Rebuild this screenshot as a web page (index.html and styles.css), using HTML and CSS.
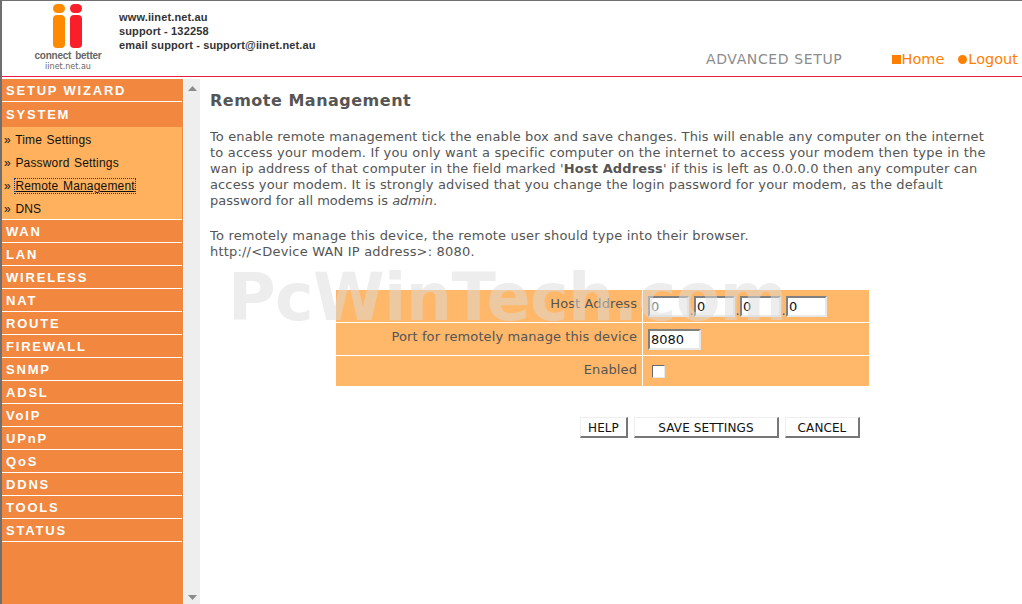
FILE: index.html
```html
<!DOCTYPE html>
<html lang="en">
<head>
<meta charset="utf-8">
<title>Remote Management</title>
<link rel="stylesheet" href="styles.css">
</head>
<body>
<div class="frame">
  <header class="top">
    <div class="logo">
      <svg class="logo-mark" width="32" height="46" viewBox="0 0 32 46">
        <rect x="1" y="0" width="12" height="9" rx="4.500" fill="#ff8a00"/>
        <rect x="1" y="11" width="12" height="33" rx="4" fill="#ff8a00"/>
        <rect x="18" y="0" width="12" height="9" rx="4.500" fill="#f91f2a"/>
        <rect x="18" y="11" width="12" height="33" rx="4" fill="#f91f2a"/>
      </svg>
      <div class="logo-tag">connect better</div>
      <div class="logo-site">iinet.net.au</div>
    </div>
    <div class="contact">
      <div>www.iinet.net.au</div>
      <div>support - 132258</div>
      <div>email support - support@iinet.net.au</div>
    </div>
    <div class="top-right">
      <span class="mode">ADVANCED SETUP</span>
      <nav class="top-links">
        <a class="top-link"><span class="sq"></span>Home</a>
        <a class="top-link"><span class="dot"></span>Logout</a>
      </nav>
    </div>
  </header>
  <div class="body">
    <aside class="side">
      <div class="m">SETUP WIZARD</div>
      <div class="m m-sys">SYSTEM</div>
      <div class="sub">
        <div class="s">» <span>Time Settings</span></div>
        <div class="s">» <span>Password Settings</span></div>
        <div class="s">» <span class="cur">Remote Management</span></div>
        <div class="s">» <span>DNS</span></div>
      </div>
      <div class="m m-w">WAN</div>
      <div class="m m-w">LAN</div>
      <div class="m m-w">WIRELESS</div>
      <div class="m m-w">NAT</div>
      <div class="m m-w">ROUTE</div>
      <div class="m m-w">FIREWALL</div>
      <div class="m m-w">SNMP</div>
      <div class="m m-w">ADSL</div>
      <div class="m m-w">VoIP</div>
      <div class="m m-w">UPnP</div>
      <div class="m m-w">QoS</div>
      <div class="m m-w">DDNS</div>
      <div class="m m-w">TOOLS</div>
      <div class="m m-w">STATUS</div>
    </aside>
    <div class="scroll">
      <svg width="9" height="5" viewBox="0 0 9 5"><path d="M0 5 4.500 0 9 5z" fill="#8a8a8a"/></svg>
      <svg width="9" height="5" viewBox="0 0 9 5"><path d="M0 0 4.500 5 9 0z" fill="#8a8a8a"/></svg>
    </div>
    <main class="main">
      <h1>Remote Management</h1>
      <p class="intro">To enable remote management tick the enable box and save changes. This will enable any computer on the internet<br><span class="wide">to access your modem. If you only want a specific computer on the internet to access your modem then type in the</span><br>wan ip address of that computer in the field marked '<b>Host Address</b>' if this is left as 0.0.0.0 then any computer can<br>access your modem. It is strongly advised that you change the login password for your modem, as the default<br><span class="tight">password for all modems is <i>admin</i>.</span></p>
      <p class="intro intro-2">To remotely manage this device, the remote user should type into their browser.<br>http://&lt;Device WAN IP address&gt;: 8080.</p>
      <div class="form">
        <div class="row r1">
          <label class="lab">Host Address</label>
          <div class="val ip">
            <input class="box in-ip in-first" value="0"><i>.</i><input class="box in-ip" value="0"><i>.</i><input class="box in-ip" value="0"><i>.</i><input class="box in-ip" value="0">
          </div>
        </div>
        <div class="row r2">
          <label class="lab">Port for remotely manage this device</label>
          <div class="val"><input class="box in-port" value="8080"></div>
        </div>
        <div class="row r3">
          <label class="lab">Enabled</label>
          <div class="val"><span class="check"></span></div>
        </div>
      </div>
      <div class="actions">
        <button class="btn b-help">HELP</button>
        <button class="btn b-save">SAVE SETTINGS</button>
        <button class="btn b-cancel">CANCEL</button>
      </div>
      <div class="mark">PcWinTech.com</div>
    </main>
  </div>
</div>
</body>
</html>
```
FILE: styles.css
```css
* { box-sizing: border-box; }
html, body { margin: 0; height: 100%; overflow: hidden; background: #fff; }
.frame {
  height: 604px;
  border-top: 1px solid #6f6f6f;
  border-left: 2px solid #6f6f6f;
  display: flex;
  flex-direction: column;
  font-family: "DejaVu Sans", Verdana, sans-serif;
}
.top {
  height: 76px;
  border-bottom: 1px solid #ea1c45;
  display: flex;
  flex: none;
}
.logo {
  width: 117px;
  padding-top: 3px;
  display: flex;
  flex-direction: column;
  align-items: center;
  color: #666;
  flex: none;
}
.logo-mark { display: block; margin-left: 15px; }
.logo-tag { font: bold 10px/12px "Liberation Sans", sans-serif; letter-spacing: -.25px; word-spacing: 1.500px; margin-left: 15px; white-space: nowrap; }
.logo-site { font: 8px/10px "DejaVu Sans", sans-serif; margin-top: 0; margin-left: 15px; }
.contact {
  font: bold 11px/14px "Liberation Sans", sans-serif;
  letter-spacing: .14px;
  color: #333;
  padding-top: 9px;
  width: 400px;
  flex: none;
  white-space: nowrap;
}
.top-right {
  flex: 1;
  display: flex;
  justify-content: space-between;
  align-items: flex-start;
  padding: 49px 4px 0 187px;
}
.mode { font-size: 14px; line-height: 18px; letter-spacing: .62px; color: #8c8c8c; }
.top-links { display: flex; gap: 14px; }
.top-link { font-size: 14.500px; line-height: 18px; color: #ff8000; display: flex; align-items: center; }
.sq { width: 9px; height: 9px; background: #ff8000; margin-right: 1px; }
.dot { width: 9px; height: 9px; border-radius: 50%; background: #ff8000; margin-right: 1px; }
.body { flex: 1; display: flex; min-height: 0; position: relative; }
.side {
  width: 181px;
  margin-top: 2px;
  background: #f2873f;
  flex: none;
}
.m {
  height: 23px;
  padding-left: 4px;
  border-bottom: 1px solid #fff;
  font: bold 13px/23px "Liberation Sans", sans-serif;
  letter-spacing: 1.800px;
  color: #fff;
  width: 180px;
}
.m-sys { height: 25px; border-bottom: 0; line-height: 26px; }
.m-w { line-height: 23px; }
.sub { background: #ffb15e; width: 180px; height: 93px; border-bottom: 1px solid #fff; }
.s {
  height: 23px;
  padding-left: 2px;
  font: 12px/27px "Liberation Sans", sans-serif;
  letter-spacing: .18px;
  word-spacing: 1px;
  color: #111;
  white-space: nowrap;
}
.cur { outline: 1px dotted #003b9a; outline-offset: 0; text-decoration: underline; text-underline-offset: 1px; }
.scroll {
  width: 17px;
  margin-top: 2px;
  background: #eee;
  border-left: 1px solid #fff;
  display: flex;
  flex-direction: column;
  justify-content: space-between;
  align-items: center;
  padding: 7px 0 4px;
  flex: none;
}
.main { flex: 1; padding: 0 0 0 10px; position: relative; color: #555; min-width: 0; }
h1 { margin: 14px 0 0; font: bold 16px/19px "DejaVu Sans", sans-serif; letter-spacing: .5px; color: #555; }
.intro { margin: 0; font-size: 13px; line-height: 16px; letter-spacing: .13px; white-space: nowrap; }
.wide { letter-spacing: .19px; }
.tight { letter-spacing: 0; }
h1 + .intro { margin-top: 19px; }
.intro-2 { letter-spacing: .19px; }
.intro + .intro { margin-top: 19px; }
.form { width: 533px; margin: 30px 0 0 126px; }
.row { display: grid; grid-template-columns: 307px 1fr; background: #ffb769; }
.r1 { height: 33px; border-bottom: 1px solid #fff; }
.r2 { height: 33px; border-bottom: 1px solid #fff; }
.r3 { height: 30px; }
.lab { font-size: 13px; line-height: 16px; letter-spacing: .1px; text-align: right; padding: 6px 5px 0 0; border-right: 1px solid #fff; color: #555; }
.val { padding: 6px 0 0 5px; display: flex; align-items: flex-start; }
.val i { width: 5px; font-style: normal; font-size: 13px; line-height: 29px; text-align: center; color: #555; }
.box {
  height: 21px;
  border: 2px solid;
  border-color: #808080 #e8e8e8 #e8e8e8 #808080;
  background: #fff;
  font: 13px/15px "DejaVu Sans", sans-serif;
  color: #111;
  padding: 1px 1px;
  outline: 0;
  border-radius: 0;
}
.in-ip { width: 41px; }
.in-first { color: #888; }
.in-port { width: 53px; }
.check {
  display: block;
  width: 13px;
  height: 13px;
  margin: 3px 0 0 4px;
  background: #fff;
  border: 1px solid;
  border-color: #6a6a6a #e8e8e8 #e8e8e8 #6a6a6a;
}
.actions { display: flex; gap: 6px; margin: 31px 0 0 370px; }
.btn {
  height: 21px;
  padding: 2px 0 0;
  background: #fff;
  border: 1px solid;
  border-width: 1px 2px 2px 1px;
  border-color: #eee #777 #777 #eee;
  font: 12px/16px "DejaVu Sans", sans-serif;
  letter-spacing: .1px;
  color: #111;
  border-radius: 0;
}
.b-help { width: 48px; }
.b-save { width: 145px; }
.b-cancel { width: 75px; }
.mark {
  position: absolute;
  left: 28px;
  top: 183px;
  font: bold 65px/76px "DejaVu Sans", sans-serif;
  letter-spacing: -.6px;
  color: rgba(220, 220, 220, .5);
  white-space: nowrap;
  pointer-events: none;
}
```
